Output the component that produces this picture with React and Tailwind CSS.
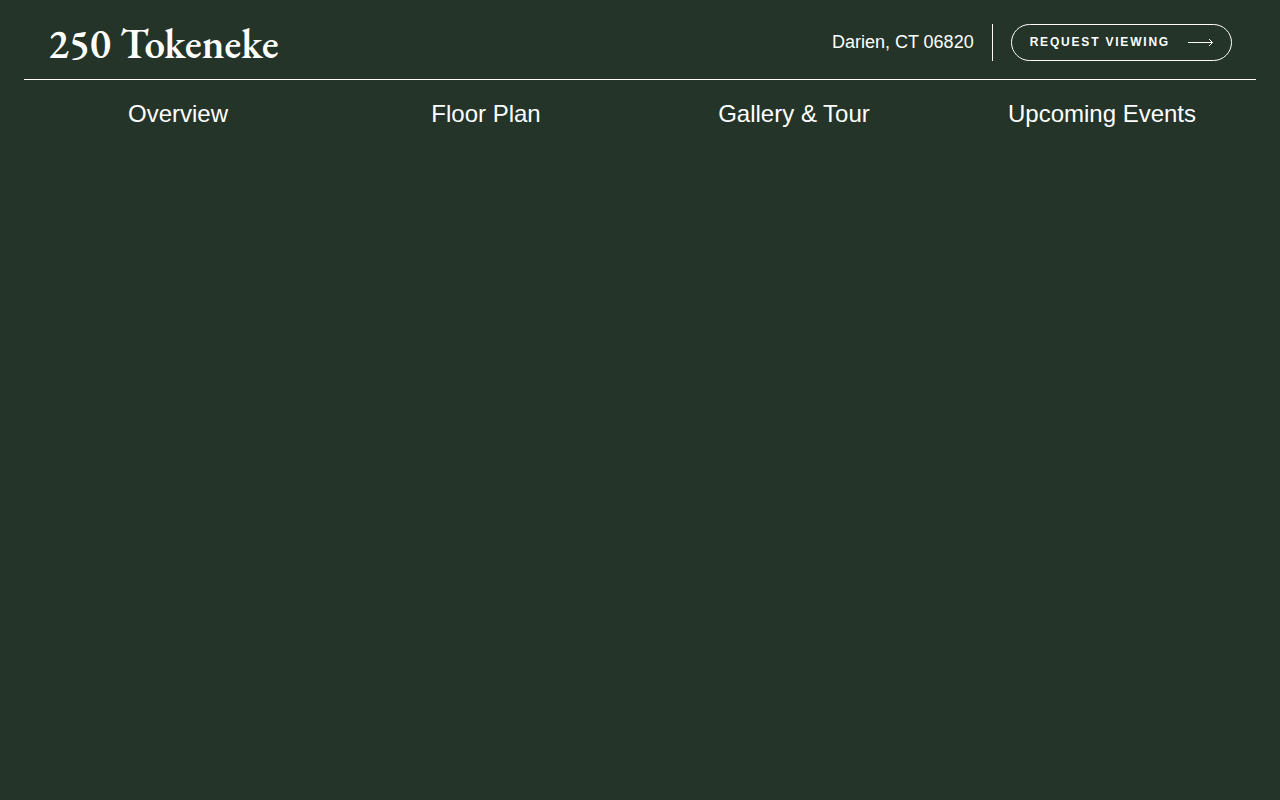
const links = ["Overview", "Floor Plan", "Gallery & Tour", "Upcoming Events"];

function Arrow() {
  return (
    <svg className="h-[9px] w-[25px] shrink-0" viewBox="0 0 25 9" fill="none" stroke="currentColor" aria-hidden="true">
      <path d="M0 4.5H24.5M21 1L24.5 4.5L21 8" />
    </svg>
  );
}

export default function App() {
  return (
    <div className="min-h-screen bg-[#243429] px-6 font-['Liberation_Sans',Arial,sans-serif] text-white">
      <header>
        <div className="flex h-20 items-start justify-between border-b border-white px-6 pt-6">
          <a href="#home" className="font-['EB_Garamond','Liberation_Serif',serif] text-[41px] leading-[39px] font-semibold whitespace-nowrap lining-nums">
            250 Tokeneke
          </a>
          <div className="flex items-center">
            <p className="border-r border-white pr-[18px] text-lg leading-[37px] whitespace-nowrap">Darien, CT 06820</p>
            <button type="button" className="ml-[18px] flex h-[37px] items-center gap-[18px] rounded-full border border-white px-[18px] text-xs font-bold tracking-[0.15em] whitespace-nowrap uppercase">
              <span className="pb-[2px]">Request Viewing</span>
              <Arrow />
            </button>
          </div>
        </div>
        <nav className="grid grid-cols-4 pt-4 text-center text-2xl leading-9">
          {links.map((label) => (
            <a key={label} href="#section">{label}</a>
          ))}
        </nav>
      </header>
    </div>
  );
}
